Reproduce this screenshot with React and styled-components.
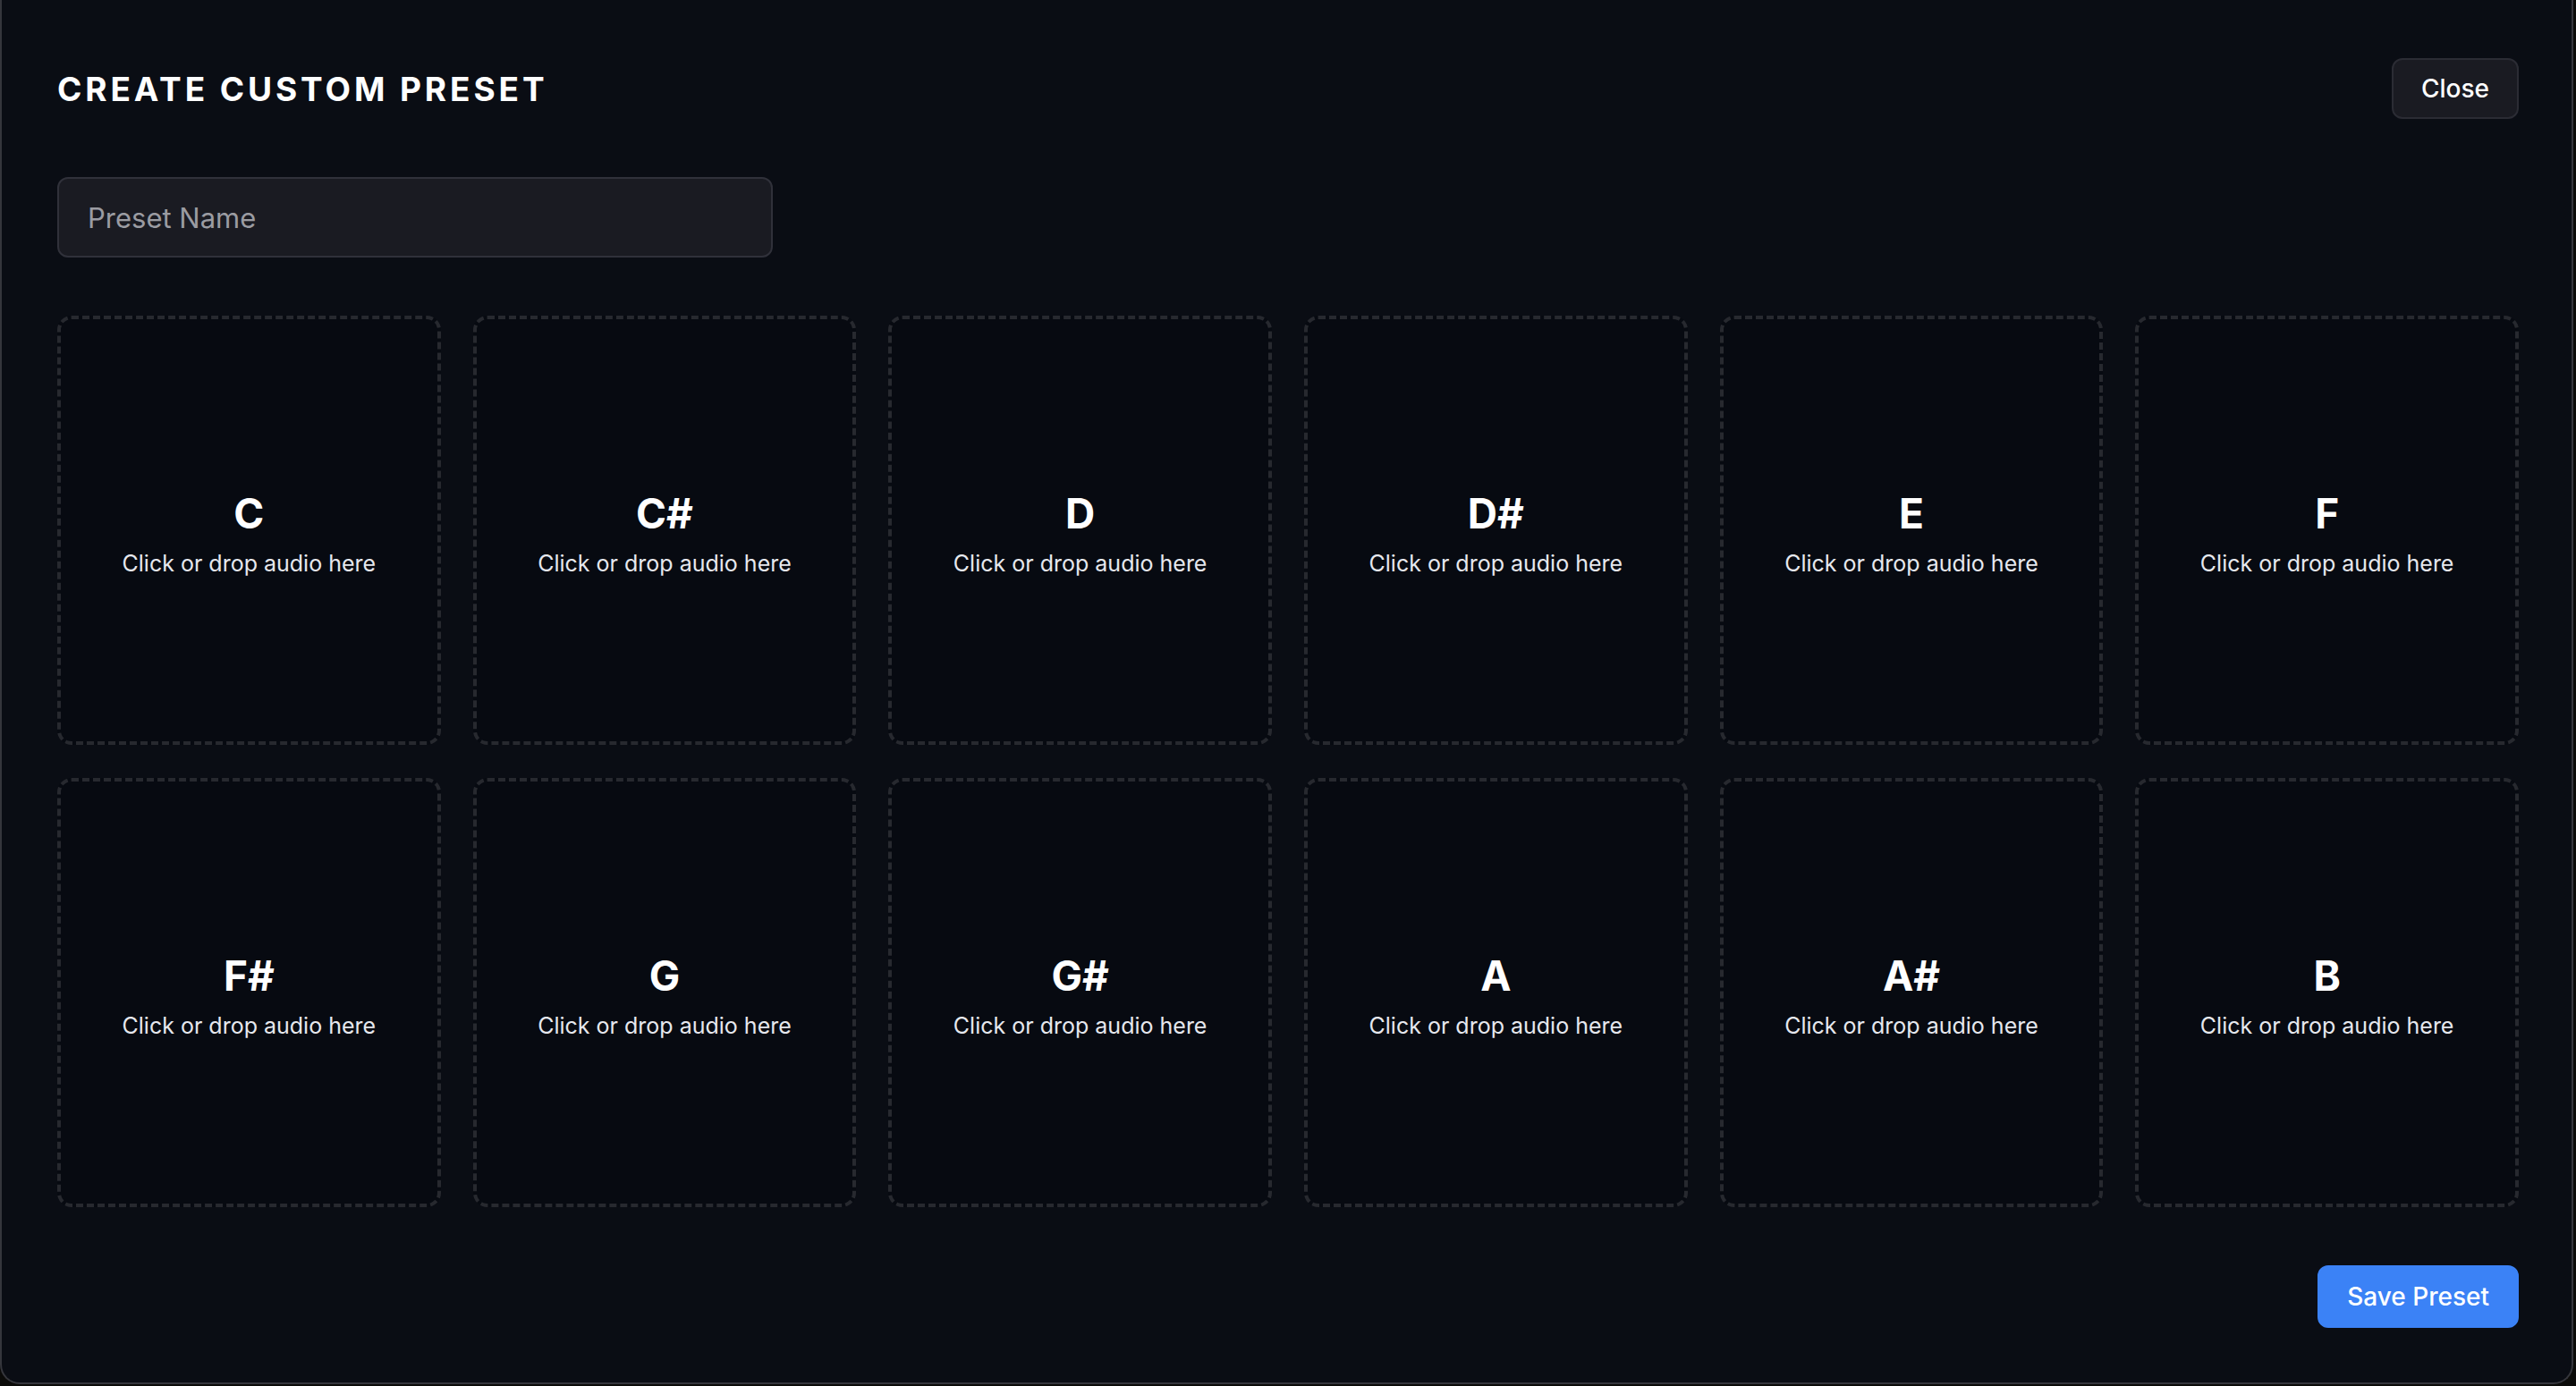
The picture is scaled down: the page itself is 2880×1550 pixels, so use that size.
import React from 'react';
import styled, { createGlobalStyle } from 'styled-components';

const GlobalStyle = createGlobalStyle`
  html, body {
    margin: 0;
    padding: 0;
    background: #0b0b09;
  }
  body {
    font-family: Inter, "Noto Sans", "Liberation Sans", sans-serif;
    -webkit-font-smoothing: antialiased;
  }
  * {
    box-sizing: border-box;
  }
`;

const Modal = styled.div`
  width: 2877px;
  height: 1548px;
  background: #0a0d14;
  border: 2px solid #35363c;
  border-top: none;
  border-radius: 0 0 22px 22px;
  padding: 65px 59px 60px 62px;
  display: flex;
  flex-direction: column;
  gap: 65px;
`;

const Header = styled.div`
  display: flex;
  align-items: center;
  justify-content: space-between;
  height: 68px;
`;

const Title = styled.h2`
  margin: 0;
  color: #ffffff;
  font-size: 37px;
  font-weight: 700;
  letter-spacing: 3.9px;
  text-transform: uppercase;
`;

const Button = styled.button`
  font-family: inherit;
  font-size: 28px;
  font-weight: 500;
  color: #ffffff;
  height: ${p => (p.primary ? '70px' : '68px')};
  padding: 0 ${p => (p.primary ? '31px' : '31px')};
  border-radius: 12px;
  border: 2px solid ${p => (p.primary ? '#3b82f6' : '#2b2c34')};
  background: ${p => (p.primary ? '#3b82f6' : '#1a1b22')};
  cursor: pointer;
`;

const NameInput = styled.input`
  width: 800px;
  height: 90px;
  padding: 0 32px;
  border-radius: 12px;
  border: 2px solid #30313a;
  background: #1a1b22;
  color: #ffffff;
  font-family: inherit;
  font-size: 31px;
  outline: none;
  &::placeholder {
    color: #9b9ca2;
  }
`;

const Grid = styled.div`
  display: grid;
  grid-template-columns: repeat(6, 1fr);
  grid-auto-rows: 480px;
  gap: 37px 36px;
`;

const Slot = styled.div`
  display: flex;
  flex-direction: column;
  align-items: center;
  justify-content: center;
  gap: 14px;
  border: 4px dashed #27292f;
  border-radius: 16px;
  background: #070a11;
  cursor: pointer;
  padding-top: 10px;
`;

const Note = styled.div`
  color: #ffffff;
  font-size: 46px;
  font-weight: 700;
  line-height: 1.1;
`;

const Hint = styled.div`
  color: #e6e8ee;
  font-size: 25px;
  line-height: 1.3;
`;

const Footer = styled.div`
  display: flex;
  justify-content: flex-end;
`;

const notes = ['C', 'C#', 'D', 'D#', 'E', 'F', 'F#', 'G', 'G#', 'A', 'A#', 'B'];

export default function App() {
  return (
    <>
      <GlobalStyle />
      <Modal>
        <Header>
          <Title>Create Custom Preset</Title>
          <Button>Close</Button>
        </Header>
        <NameInput placeholder="Preset Name" />
        <Grid>
          {notes.map(n => (
            <Slot key={n}>
              <Note>{n}</Note>
              <Hint>Click or drop audio here</Hint>
            </Slot>
          ))}
        </Grid>
        <Footer>
          <Button primary>Save Preset</Button>
        </Footer>
      </Modal>
    </>
  );
}
